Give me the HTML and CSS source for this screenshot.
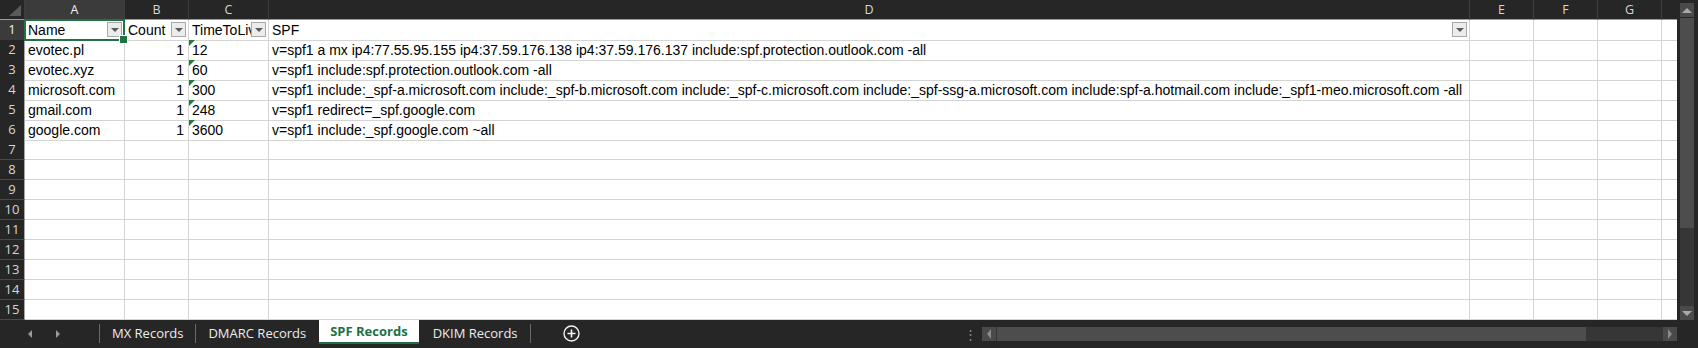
FILE: index.html
```html
<!DOCTYPE html>
<html lang="en">
<head>
    <meta charset="UTF-8">
    <title>SPF Records</title>
    <link rel="stylesheet" href="styles.css">
</head>
<body>
    <div class="sheet-area">
        <div class="grid">
            <div class="row head-row">
                <div class="corner"><span class="corner-tri"></span></div>
                <div class="col-head selected">A</div>
                <div class="col-head">B</div>
                <div class="col-head">C</div>
                <div class="col-head">D</div>
                <div class="col-head">E</div>
                <div class="col-head">F</div>
                <div class="col-head">G</div>
                <div class="col-head last"></div>
            </div>

            <div class="row">
                <div class="row-head selected">1</div>
                <div class="cell active">Name<span class="filter"></span></div>
                <div class="cell">Count<span class="filter"></span></div>
                <div class="cell">TimeToLive<span class="filter"></span></div>
                <div class="cell">SPF<span class="filter"></span></div>
                <div class="cell"></div><div class="cell"></div><div class="cell"></div><div class="cell last"></div>
            </div>
            <div class="row">
                <div class="row-head">2</div>
                <div class="cell">evotec.pl</div>
                <div class="cell num">1</div>
                <div class="cell flagged">12</div>
                <div class="cell">v=spf1 a mx ip4:77.55.95.155 ip4:37.59.176.138 ip4:37.59.176.137 include:spf.protection.outlook.com -all</div>
                <div class="cell"></div><div class="cell"></div><div class="cell"></div><div class="cell last"></div>
            </div>
            <div class="row">
                <div class="row-head">3</div>
                <div class="cell">evotec.xyz</div>
                <div class="cell num">1</div>
                <div class="cell flagged">60</div>
                <div class="cell">v=spf1 include:spf.protection.outlook.com -all</div>
                <div class="cell"></div><div class="cell"></div><div class="cell"></div><div class="cell last"></div>
            </div>
            <div class="row">
                <div class="row-head">4</div>
                <div class="cell">microsoft.com</div>
                <div class="cell num">1</div>
                <div class="cell flagged">300</div>
                <div class="cell">v=spf1 include:_spf-a.microsoft.com include:_spf-b.microsoft.com include:_spf-c.microsoft.com include:_spf-ssg-a.microsoft.com include:spf-a.hotmail.com include:_spf1-meo.microsoft.com -all</div>
                <div class="cell"></div><div class="cell"></div><div class="cell"></div><div class="cell last"></div>
            </div>
            <div class="row">
                <div class="row-head">5</div>
                <div class="cell">gmail.com</div>
                <div class="cell num">1</div>
                <div class="cell flagged">248</div>
                <div class="cell">v=spf1 redirect=_spf.google.com</div>
                <div class="cell"></div><div class="cell"></div><div class="cell"></div><div class="cell last"></div>
            </div>
            <div class="row">
                <div class="row-head">6</div>
                <div class="cell">google.com</div>
                <div class="cell num">1</div>
                <div class="cell flagged">3600</div>
                <div class="cell">v=spf1 include:_spf.google.com ~all</div>
                <div class="cell"></div><div class="cell"></div><div class="cell"></div><div class="cell last"></div>
            </div>
            <div class="row">
                <div class="row-head">7</div>
                <div class="cell"></div><div class="cell"></div><div class="cell"></div><div class="cell"></div>
                <div class="cell"></div><div class="cell"></div><div class="cell"></div><div class="cell last"></div>
            </div>
            <div class="row">
                <div class="row-head">8</div>
                <div class="cell"></div><div class="cell"></div><div class="cell"></div><div class="cell"></div>
                <div class="cell"></div><div class="cell"></div><div class="cell"></div><div class="cell last"></div>
            </div>
            <div class="row">
                <div class="row-head">9</div>
                <div class="cell"></div><div class="cell"></div><div class="cell"></div><div class="cell"></div>
                <div class="cell"></div><div class="cell"></div><div class="cell"></div><div class="cell last"></div>
            </div>
            <div class="row">
                <div class="row-head">10</div>
                <div class="cell"></div><div class="cell"></div><div class="cell"></div><div class="cell"></div>
                <div class="cell"></div><div class="cell"></div><div class="cell"></div><div class="cell last"></div>
            </div>
            <div class="row">
                <div class="row-head">11</div>
                <div class="cell"></div><div class="cell"></div><div class="cell"></div><div class="cell"></div>
                <div class="cell"></div><div class="cell"></div><div class="cell"></div><div class="cell last"></div>
            </div>
            <div class="row">
                <div class="row-head">12</div>
                <div class="cell"></div><div class="cell"></div><div class="cell"></div><div class="cell"></div>
                <div class="cell"></div><div class="cell"></div><div class="cell"></div><div class="cell last"></div>
            </div>
            <div class="row">
                <div class="row-head">13</div>
                <div class="cell"></div><div class="cell"></div><div class="cell"></div><div class="cell"></div>
                <div class="cell"></div><div class="cell"></div><div class="cell"></div><div class="cell last"></div>
            </div>
            <div class="row">
                <div class="row-head">14</div>
                <div class="cell"></div><div class="cell"></div><div class="cell"></div><div class="cell"></div>
                <div class="cell"></div><div class="cell"></div><div class="cell"></div><div class="cell last"></div>
            </div>
            <div class="row">
                <div class="row-head">15</div>
                <div class="cell"></div><div class="cell"></div><div class="cell"></div><div class="cell"></div>
                <div class="cell"></div><div class="cell"></div><div class="cell"></div><div class="cell last"></div>
            </div>
        </div>

        <div class="vscroll">
            <div class="sb-btn"><span class="tri-up"></span></div>
            <div class="v-thumb"></div>
            <div class="v-track"></div>
            <div class="sb-btn"><span class="tri-down"></span></div>
        </div>
    </div>

    <div class="tabbar">
        <div class="tab-nav">
            <span class="tri-left"></span>
            <span class="tri-right"></span>
        </div>
        <div class="tab">MX Records</div>
        <div class="tab sep-left">DMARC Records</div>
        <div class="tab current">SPF Records</div>
        <div class="tab">DKIM Records</div>
        <div class="add-sheet">
            <svg width="17" height="17" viewBox="0 0 17 17">
                <circle cx="8.5" cy="8.5" r="7.5" fill="none" stroke="#f2f2f2" stroke-width="1.4"/>
                <path d="M8.5 4.5v8M4.5 8.5h8" stroke="#f2f2f2" stroke-width="1.6"/>
            </svg>
        </div>
        <div class="splitter">⋮</div>
        <div class="hscroll">
            <div class="sb-btn"><span class="tri-left small"></span></div>
            <div class="h-thumb"></div>
            <div class="h-track"></div>
            <div class="sb-btn"><span class="tri-right small"></span></div>
        </div>
    </div>
</body>
</html>
```

FILE: styles.css
```css
* {
    margin: 0;
    padding: 0;
    box-sizing: border-box;
}

body {
    background: #262626;
    width: 1698px;
    height: 348px;
    overflow: hidden;
    font-family: 'Liberation Sans', Arial, sans-serif;
}

.sheet-area {
    display: flex;
    height: 320px;
}

.grid {
    width: 1677px;
    background: #fff;
}

.row {
    display: grid;
    grid-template-columns: 25px 100px 64px 80px 1201px 64px 64px 64px 15px;
    height: 20px;
}

/* column headers */
.head-row {
    background: #262626;
}

.corner {
    position: relative;
    border-right: 1px solid #3d3d3d;
    border-bottom: 1px solid #9a9a9a;
}

.corner-tri {
    position: absolute;
    right: 3px;
    bottom: 3px;
    width: 0;
    height: 0;
    border-left: 12px solid transparent;
    border-bottom: 11px solid #5a5a5a;
}

.col-head {
    font-family: 'Open Sans', 'Noto Sans', sans-serif;
    font-size: 12.5px;
    line-height: 19px;
    color: #d6d6d6;
    text-align: center;
    border-right: 1px solid #3d3d3d;
    border-bottom: 1px solid #9a9a9a;
}

.col-head.selected {
    background: #3b3b3b;
    color: #f0f0f0;
}

.col-head.last {
    border-right: none;
}

/* row headers */
.row-head {
    font-family: 'Open Sans', 'Noto Sans', sans-serif;
    font-size: 13px;
    line-height: 19px;
    color: #d6d6d6;
    text-align: center;
    background: #262626;
    border-bottom: 1px solid #4a4a4a;
    border-right: 1px solid #a6a6a6;
}

.row-head.selected {
    background: #3b3b3b;
    color: #f0f0f0;
}

/* cells */
.cell {
    position: relative;
    font-size: 14px;
    line-height: 19px;
    padding: 1px 3px 0;
    color: #000;
    white-space: nowrap;
    border-right: 1px solid #d4d4d4;
    border-bottom: 1px solid #d4d4d4;
}

.cell.last {
    border-right: none;
}

.cell.num {
    text-align: right;
    padding-right: 4px;
}

.cell.flagged::before {
    content: "";
    position: absolute;
    left: 0;
    top: 0;
    border-top: 6px solid #1f7d3c;
    border-right: 6px solid transparent;
}

.cell.active::after {
    content: "";
    position: absolute;
    left: -1px;
    top: -1px;
    right: -1px;
    bottom: -1px;
    border: 2px solid #217346;
}

.cell.active::before {
    content: "";
    position: absolute;
    right: -4px;
    bottom: -4px;
    width: 7px;
    height: 7px;
    background: #217346;
    border: 1px solid #fff;
    z-index: 2;
}

.filter {
    position: absolute;
    right: 2px;
    top: 2px;
    width: 15px;
    height: 15px;
    background: #ececec;
    border: 1px solid #a9a9a9;
}

.filter::after {
    content: "";
    position: absolute;
    left: 3px;
    top: 5px;
    border-left: 4px solid transparent;
    border-right: 4px solid transparent;
    border-top: 4px solid #5c5c5c;
}

/* vertical scrollbar */
.vscroll {
    width: 21px;
    display: flex;
    flex-direction: column;
    padding: 3px 4px 0 3px;
}

.sb-btn {
    width: 14px;
    height: 14px;
    background: #4a4a4a;
    display: flex;
    align-items: center;
    justify-content: center;
}

.v-thumb {
    height: 210px;
    margin-top: 1px;
    background: #4d4d4d;
}

.v-track {
    flex: 1;
    background: #363636;
}

.tri-up {
    border-left: 5px solid transparent;
    border-right: 5px solid transparent;
    border-bottom: 5px solid #a8a8a8;
}

.tri-down {
    border-left: 5px solid transparent;
    border-right: 5px solid transparent;
    border-top: 5px solid #a8a8a8;
}

.tri-left {
    border-top: 4px solid transparent;
    border-bottom: 4px solid transparent;
    border-right: 4px solid #9a9a9a;
}

.tri-right {
    border-top: 4px solid transparent;
    border-bottom: 4px solid transparent;
    border-left: 4px solid #9a9a9a;
}

.tri-left.small,
.tri-right.small {
    border-top-width: 5px;
    border-bottom-width: 5px;
    border-left-color: #8a8a8a;
    border-right-color: #8a8a8a;
}

/* sheet tabs */
.tabbar {
    display: flex;
    height: 28px;
    font-family: 'Open Sans', 'Noto Sans', sans-serif;
    font-size: 13px;
    color: #ececec;
}

.tab-nav {
    width: 100px;
    display: flex;
    align-items: center;
    gap: 24px;
    padding-left: 28px;
    border-right: 1px solid #6a6a6a;
    margin: 4px 0 5px;
}

.tab {
    height: 24px;
    line-height: 24px;
    padding: 0 12px;
    border-right: 1px solid #6a6a6a;
}

.tab.sep-left {
    border-right: none;
}

.tab:not(.current) {
    height: 19px;
    line-height: 19px;
    margin-top: 4px;
}

.tab.current {
    background: #fff;
    color: #1e7145;
    font-weight: bold;
    border-right: none;
    border-bottom: 2px solid #1e7145;
    line-height: 22px;
    padding: 0 11px;
    margin-left: 1px;
}

.tab.current + .tab {
    margin-left: 2px;
}

.add-sheet {
    display: flex;
    align-items: center;
    padding-left: 32px;
    margin-top: -2px;
}

.add-sheet svg {
    display: block;
}

.splitter {
    margin-left: 384px;
    width: 12px;
    color: #8a8a8a;
    font-size: 13px;
    line-height: 28px;
    text-align: center;
}

.hscroll {
    flex: 1;
    display: flex;
    height: 14px;
    margin-top: 7px;
    margin-left: 6px;
    margin-right: 21px;
    background: #363636;
}

.h-thumb {
    width: 589px;
    margin-left: 1px;
    background: #4d4d4d;
}

.h-track {
    flex: 1;
}
```
